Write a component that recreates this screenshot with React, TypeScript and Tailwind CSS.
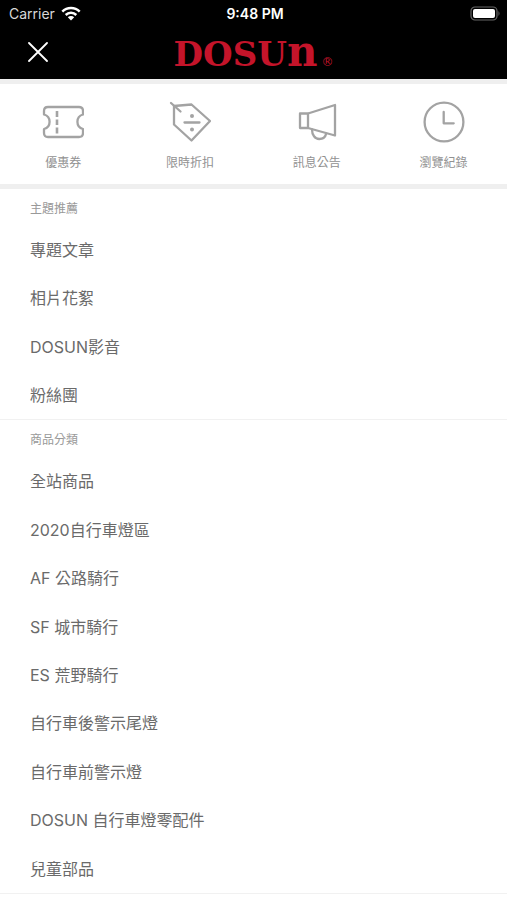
import type { ReactNode } from "react";

type Shortcut = { label: string; icon: ReactNode };
type Section = { id: string; title: string; items: string[]; listClass: string };

const iconProps = {
  viewBox: "0 0 42 42",
  fill: "none",
  stroke: "currentColor",
  strokeWidth: 2.3,
  strokeLinecap: "round" as const,
  strokeLinejoin: "round" as const,
  className: "size-[42px]",
  "aria-hidden": true,
};

const shortcuts: Shortcut[] = [
  {
    label: "優惠券",
    icon: (
      <svg {...iconProps}>
        <path d="M6 6h31q4 0 4 4v3.500a7.500 7.500 0 0 0 0 14.500v4q0 4-4 4H6q-4 0-4-4v-4a7.500 7.500 0 0 0 0-14.500V10q0-4 4-4Z" />
        <path d="M15 10v6M15 18.500v5.500M15 26.500v6" strokeWidth="2.600" strokeLinecap="butt" />
      </svg>
    ),
  },
  {
    label: "限時折扣",
    icon: (
      <svg {...iconProps}>
        <path d="M5 5 22.500 3.500 41 20 22.500 39.500 5 23.500Z" />
        <path d="m2 2 9.500 8.500M15.500 21.500h15" />
        <circle cx="23" cy="15" r="2" fill="currentColor" stroke="none" />
        <circle cx="23" cy="28.500" r="2" fill="currentColor" stroke="none" />
      </svg>
    ),
  },
  {
    label: "訊息公告",
    icon: (
      <svg {...iconProps}>
        <path d="M4 12.500h8l27-8.500v30.500l-27-7.500H4ZM12 12.500V27" />
        <path d="M16 28.500c0 5.500 3 9.500 7.200 9.500 3.600 0 6.300-2.200 7-5.500" />
      </svg>
    ),
  },
  {
    label: "瀏覽紀錄",
    icon: (
      <svg {...iconProps}>
        <circle cx="21" cy="21" r="19.400" />
        <path d="M20.700 11v11.300h10" />
      </svg>
    ),
  },
];

const sections: Section[] = [
  {
    id: "featured",
    title: "主題推薦",
    items: ["專題文章", "相片花絮", "DOSUN影音", "粉絲團"],
    listClass: "min-h-[193px]",
  },
  {
    id: "categories",
    title: "商品分類",
    items: [
      "全站商品",
      "2020自行車燈區",
      "AF 公路騎行",
      "SF 城市騎行",
      "ES 荒野騎行",
      "自行車後警示尾燈",
      "自行車前警示燈",
      "DOSUN 自行車燈零配件",
      "兒童部品",
    ],
    listClass: "min-h-[436px]",
  },
];

function StatusBar() {
  return (
    <div className="grid h-[27px] grid-cols-3 items-center pr-[6px] pl-[9px] text-sm leading-5">
      <div className="flex items-center gap-[6px] text-[#d8d8d8]">
        <span>Carrier</span>
        <svg viewBox="0 0 20 15" className="h-[15px] w-5 text-white" fill="none" stroke="currentColor" strokeWidth="2.500" aria-label="Wi-Fi">
          <path d="M1.300 5.700a12.300 12.300 0 0 1 17.400 0M4.700 9a7.500 7.500 0 0 1 10.600 0" />
          <path d="M10 14.500 6.800 11.300a4.600 4.600 0 0 1 6.400 0Z" fill="currentColor" stroke="none" />
        </svg>
      </div>
      <time className="text-center font-semibold">9:48 PM</time>
      <svg viewBox="0 0 31 15" className="h-[15px] w-[31px] justify-self-end" aria-label="Battery full">
        <rect x="1" y="1" width="26" height="13" rx="4" fill="none" stroke="#666" strokeWidth="1.200" />
        <rect x="3" y="3" width="22" height="9" rx="2" fill="#fff" />
        <path d="M28.500 5q2 2.500 0 5Z" fill="#666" />
      </svg>
    </div>
  );
}

function Header() {
  return (
    <header className="bg-black text-white">
      <StatusBar />
      <div className="grid h-[52px] grid-cols-[48px_1fr_48px] grid-rows-[50px]">
        <button type="button" aria-label="關閉" className="flex items-center justify-end">
          <svg viewBox="0 0 20 20" className="size-5" fill="none" stroke="currentColor" strokeWidth="1.800" strokeLinecap="round" aria-hidden>
            <path d="m1 1 18 18M19 1 1 19" />
          </svg>
        </button>
        <a href="#home" className="flex items-baseline justify-center gap-1 font-['DejaVu_Serif',serif] leading-[54px] text-[#c4142a]">
          <span className="text-[34px] font-bold">
            DOSU<span className="text-[42px] leading-none">n</span>
          </span>
          <span className="font-['DejaVu_Sans',sans-serif] text-xs">®</span>
        </a>
      </div>
    </header>
  );
}

export default function App() {
  return (
    <div className="min-h-screen bg-white font-[Inter,'Noto_Sans_CJK_TC',sans-serif]">
      <Header />
      <nav aria-label="快速功能" className="border-t-[5px] border-b-[5px] border-[#efefef]">
        <ul className="grid grid-cols-4">
          {shortcuts.map((s) => (
            <li key={s.label}>
              <a href="#shortcut" className="flex h-[100px] flex-col items-center gap-[10px] pt-[17px] text-xs leading-5 text-[#919191]">
                <span className="text-[#a3a3a3]">{s.icon}</span>
                {s.label}
              </a>
            </li>
          ))}
        </ul>
      </nav>
      <main>
        {sections.map((section) => (
          <section key={section.id} aria-labelledby={section.id} className="border-b border-[#f1f1f1]">
            <h2 id={section.id} className="px-[30px] pt-[10px] pb-[7px] text-xs leading-5 text-[#999]">
              {section.title}
            </h2>
            <ul className={`grid auto-rows-fr ${section.listClass}`}>
              {section.items.map((item) => (
                <li key={item} className="grid">
                  <a href="#item" className="flex items-center px-[30px] text-base leading-6 text-[#6a6a6a]">
                    {item}
                  </a>
                </li>
              ))}
            </ul>
          </section>
        ))}
      </main>
    </div>
  );
}
